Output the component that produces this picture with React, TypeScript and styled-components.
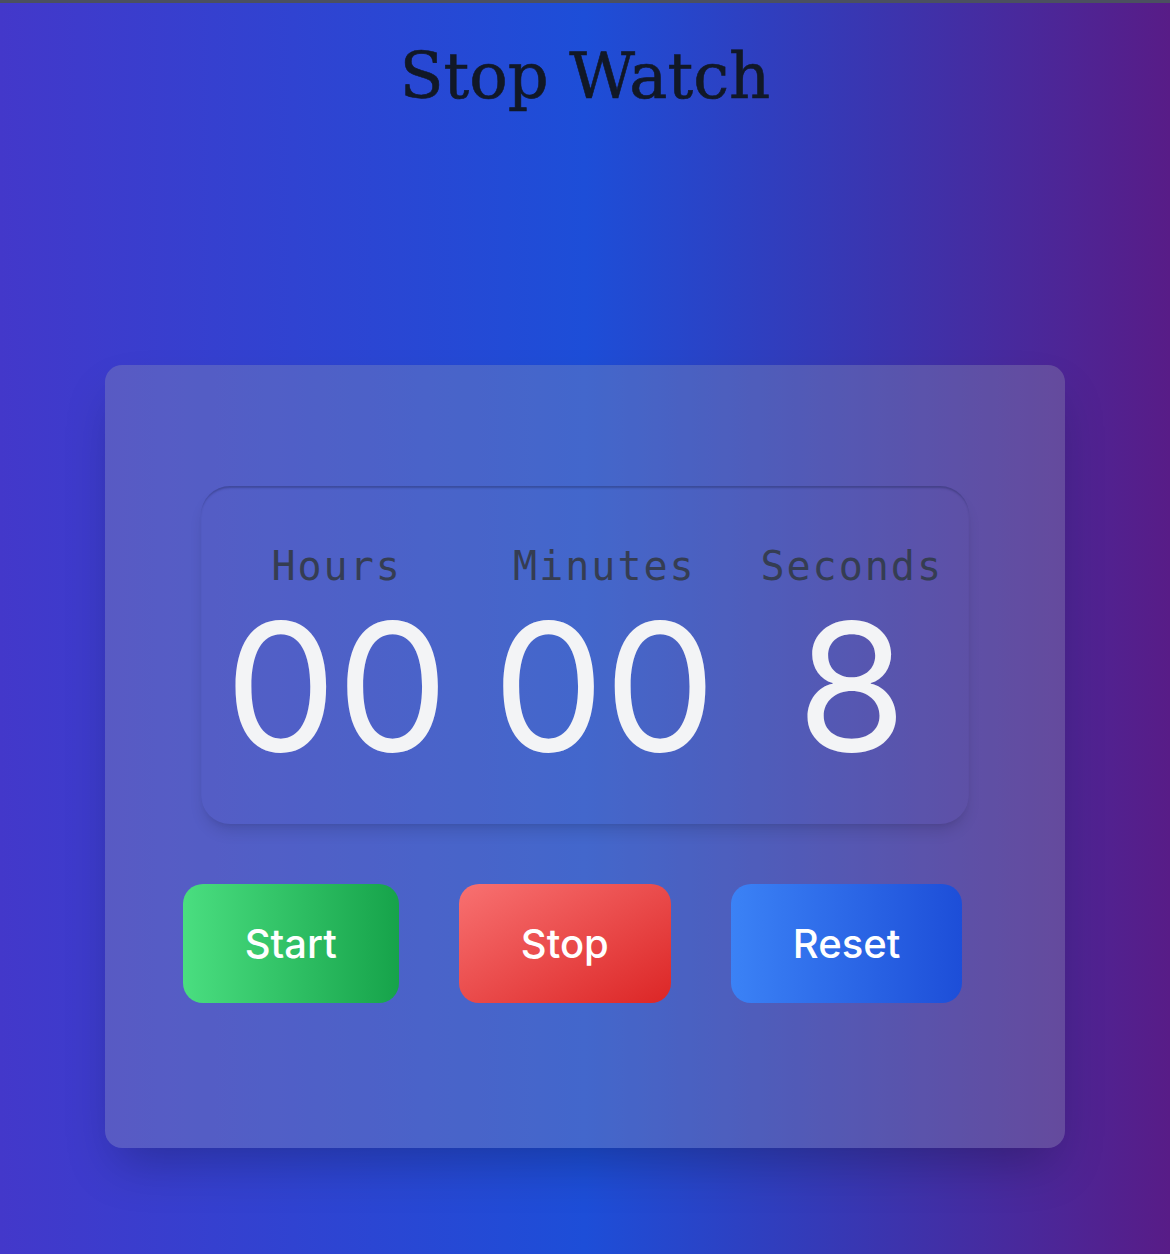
import React from "react";
import styled, { createGlobalStyle } from "styled-components";

const GlobalStyle = createGlobalStyle`
  html, body {
    margin: 0;
    padding: 0;
  }
  body {
    font-family: "Inter", "Noto Sans", sans-serif;
    border-top: 3px solid #4b5060;
  }
  * { box-sizing: border-box; }
`;

const Page = styled.main`
  min-height: 1251px;
  display: flex;
  flex-direction: column;
  align-items: center;
  background: linear-gradient(to right, #4338ca 0%, #1d4ed8 50%, #581c87 100%);
`;

const Title = styled.h1`
  margin: 41px 0 0;
  font-family: "DejaVu Serif", "Liberation Serif", serif;
  font-weight: 400;
  font-size: 64px;
  line-height: 64px;
  color: #111827;
  -webkit-text-stroke: 0.6px #111827;
`;

const Card = styled.section`
  margin-top: 257px;
  width: 960px;
  height: 783px;
  padding-top: 121px;
  border-radius: 17px;
  background: rgba(156, 163, 175, 0.3);
  box-shadow: 0 25px 50px -12px rgba(0, 0, 0, 0.25);
  display: flex;
  flex-direction: column;
  align-items: center;
`;

const Display = styled.div`
  width: 768px;
  height: 338px;
  padding: 57px 26px 0 24px;
  border-radius: 29px;
  display: flex;
  justify-content: space-between;
  box-shadow: inset 0 3px 2px -1px rgba(30, 35, 80, 0.35),
    0 10px 15px -3px rgba(0, 0, 0, 0.12), 0 4px 6px -4px rgba(0, 0, 0, 0.1);
`;

const Unit = styled.div`
  display: flex;
  flex-direction: column;
  align-items: center;
`;

const Label = styled.span`
  font-family: "DejaVu Sans Mono", "Liberation Mono", monospace;
  font-size: 40px;
  line-height: 46px;
  letter-spacing: 2px;
  color: #353d52;
`;

const Value = styled.span`
  margin-top: 10px;
  font-family: "Inter", sans-serif;
  font-weight: 400;
  font-size: 177px;
  line-height: 177px;
  color: #f3f4f6;
`;

const Controls = styled.div`
  margin-top: 60px;
  width: 100%;
  padding-right: 25px;
  display: flex;
  justify-content: center;
  gap: 60px;
`;

const Button = styled.button<{ $bg: string }>`
  height: 119px;
  padding: 0 62px;
  border: none;
  border-radius: 20px;
  background: ${(p) => p.$bg};
  color: #ffffff;
  font-family: "Inter", sans-serif;
  font-weight: 500;
  font-size: 40px;
  line-height: 60px;
  cursor: pointer;
`;

const units = [
  { label: "Hours", value: "00" },
  { label: "Minutes", value: "00" },
  { label: "Seconds", value: "8" },
];

const buttons = [
  { text: "Start", bg: "linear-gradient(to right, #4ade80, #16a34a)" },
  { text: "Stop", bg: "linear-gradient(to bottom right, #f87171, #dc2626)" },
  { text: "Reset", bg: "linear-gradient(to right, #3b82f6, #1d4ed8)" },
];

export default function App() {
  return (
    <>
      <GlobalStyle />
      <Page>
        <Title>Stop Watch</Title>
        <Card>
          <Display>
            {units.map((u) => (
              <Unit key={u.label}>
                <Label>{u.label}</Label>
                <Value>{u.value}</Value>
              </Unit>
            ))}
          </Display>
          <Controls>
            {buttons.map((b) => (
              <Button key={b.text} $bg={b.bg}>
                {b.text}
              </Button>
            ))}
          </Controls>
        </Card>
      </Page>
    </>
  );
}
